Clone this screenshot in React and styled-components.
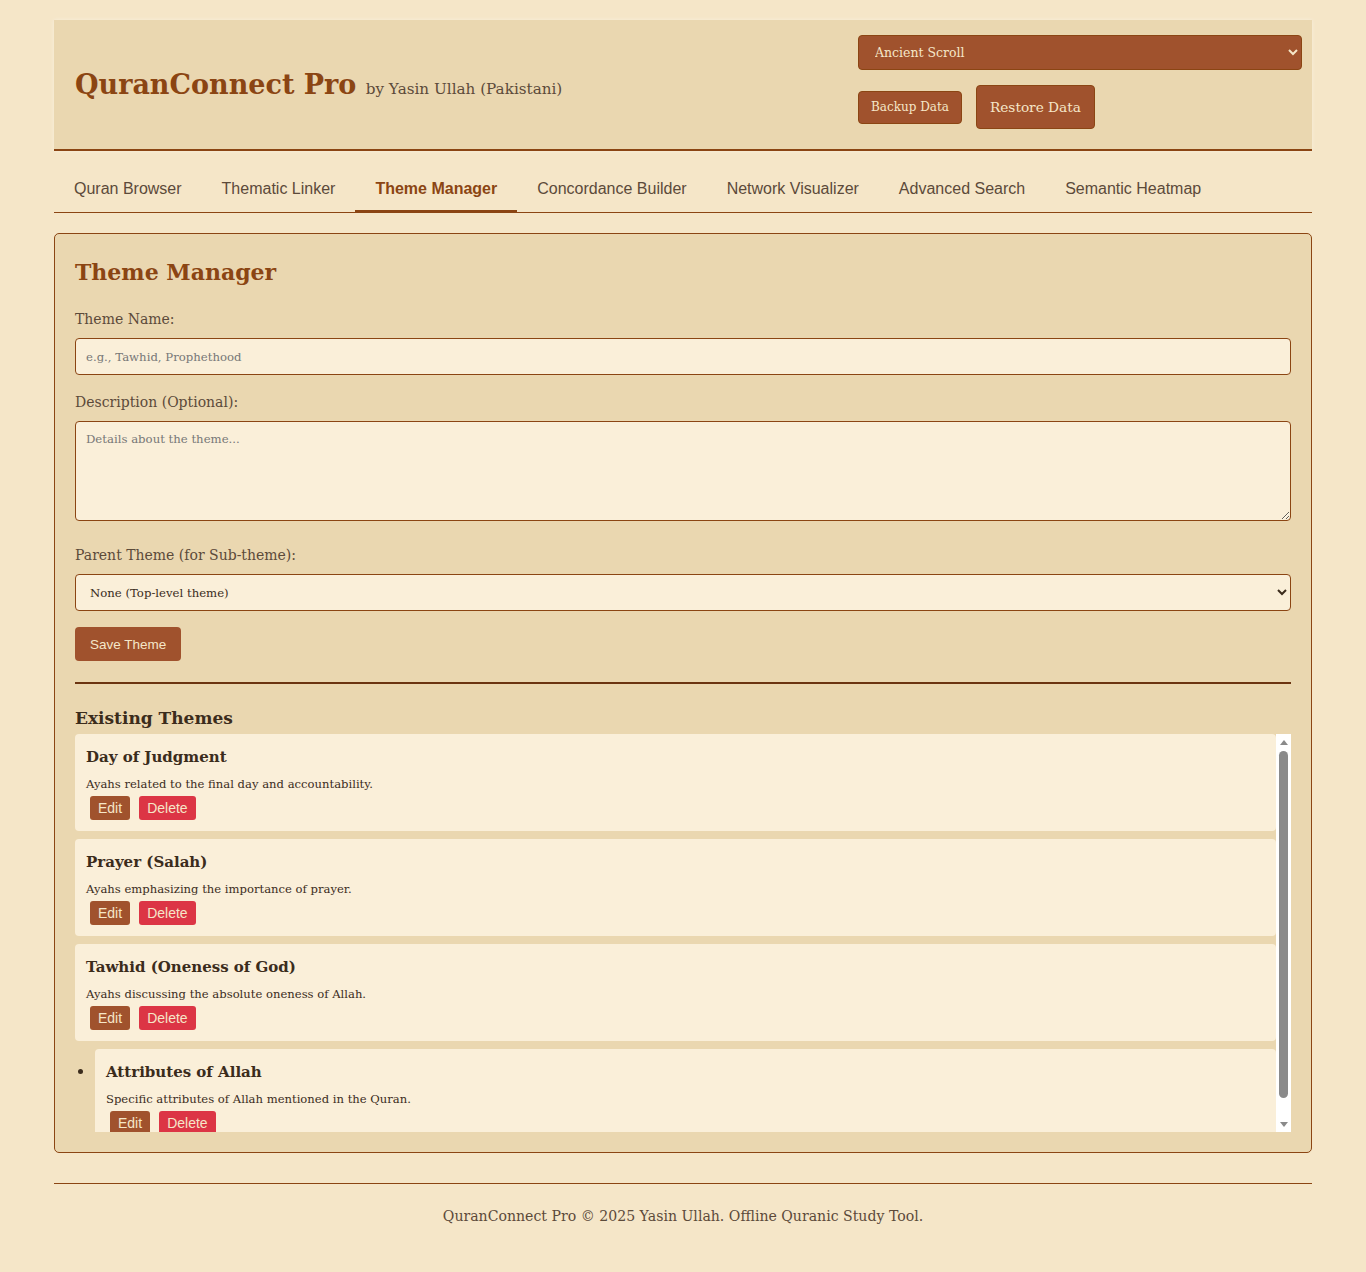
import React, { useState } from "react";
import styled, { createGlobalStyle } from "styled-components";

const colors = {
  page: "#f5e6c8",
  panel: "#ead7b0",
  cream: "#faefd9",
  brown: "#8b4513",
  sienna: "#a0522d",
  text: "#5c4a3a",
  dark: "#3b2c1c",
  light: "#f5e6c8",
  red: "#dc3545",
  scroll: "#8a8a8a",
};

const serif = `"DejaVu Serif", Georgia, serif`;
const sans = `"Liberation Sans", Arial, sans-serif`;

const GlobalStyle = createGlobalStyle`
  body {
    margin: 0;
    background: ${colors.page};
    font-family: ${serif};
    color: ${colors.text};
  }
`;

const tabs = [
  "Quran Browser",
  "Thematic Linker",
  "Theme Manager",
  "Concordance Builder",
  "Network Visualizer",
  "Advanced Search",
  "Semantic Heatmap",
];

const themes = [
  {
    title: "Day of Judgment",
    desc: "Ayahs related to the final day and accountability.",
  },
  {
    title: "Prayer (Salah)",
    desc: "Ayahs emphasizing the importance of prayer.",
  },
  {
    title: "Tawhid (Oneness of God)",
    desc: "Ayahs discussing the absolute oneness of Allah.",
    children: [
      {
        title: "Attributes of Allah",
        desc: "Specific attributes of Allah mentioned in the Quran.",
      },
    ],
  },
];

const ThemeItem = ({ theme }) => (
  <>
    <Item>
      <ItemTitle>{theme.title}</ItemTitle>
      <ItemDesc>{theme.desc}</ItemDesc>
      <Actions>
        <SmallButton>Edit</SmallButton>
        <SmallButton $danger>Delete</SmallButton>
      </Actions>
    </Item>
    {theme.children && (
      <SubList>
        {theme.children.map((child) => (
          <ThemeItem key={child.title} theme={child} />
        ))}
      </SubList>
    )}
  </>
);

const Scrollbar = () => (
  <Track>
    <Arrow width="8" height="5" viewBox="0 0 8 5">
      <path d="M4 0 L8 5 L0 5 Z" />
    </Arrow>
    <Thumb />
    <Arrow width="8" height="5" viewBox="0 0 8 5">
      <path d="M0 0 L8 0 L4 5 Z" />
    </Arrow>
  </Track>
);

const App = () => {
  const [active, setActive] = useState("Theme Manager");

  return (
    <Wrapper>
      <GlobalStyle />
      <Header>
        <Title>
          QuranConnect Pro <Byline>by Yasin Ullah (Pakistani)</Byline>
        </Title>
        <Controls>
          <SkinSelect defaultValue="scroll">
            <option value="scroll">Ancient Scroll</option>
            <option value="night">Night Reading</option>
          </SkinSelect>
          <ControlRow>
            <HeaderButton>Backup Data</HeaderButton>
            <HeaderButton $large>Restore Data</HeaderButton>
          </ControlRow>
        </Controls>
      </Header>

      <Nav>
        {tabs.map((tab) => (
          <Tab key={tab} $active={tab === active} onClick={() => setActive(tab)}>
            {tab}
          </Tab>
        ))}
      </Nav>

      <Panel>
        <PanelTitle>Theme Manager</PanelTitle>
        <Field $gap={18}>
          <Label>Theme Name:</Label>
          <Input type="text" placeholder="e.g., Tawhid, Prophethood" />
        </Field>
        <Field $gap={25}>
          <Label>Description (Optional):</Label>
          <TextArea placeholder="Details about the theme..." />
        </Field>
        <Field $gap={16}>
          <Label>Parent Theme (for Sub-theme):</Label>
          <ParentSelect defaultValue="">
            <option value="">None (Top-level theme)</option>
          </ParentSelect>
        </Field>
        <SaveButton>Save Theme</SaveButton>
        <Divider />
        <SectionTitle>Existing Themes</SectionTitle>
        <ListFrame>
          <ThemeList>
            {themes.map((theme) => (
              <ThemeItem key={theme.title} theme={theme} />
            ))}
          </ThemeList>
          <Scrollbar />
        </ListFrame>
      </Panel>

      <Footer>
        QuranConnect Pro © 2025 Yasin Ullah. Offline Quranic Study Tool.
      </Footer>
    </Wrapper>
  );
};

export default App;

const Wrapper = styled.div`
  max-width: 1258px;
  margin: 0 auto;
  padding-top: 20px;
`;

const Header = styled.header`
  display: flex;
  justify-content: space-between;
  align-items: center;
  background: ${colors.panel};
  padding: 15px 10px 20px 21px;
  border-bottom: 2px solid ${colors.brown};
  box-shadow: 0 0 4px rgba(255, 255, 255, 0.4);
`;

const Title = styled.h1`
  margin: 4px 0 0;
  font-size: 27px;
  font-weight: 700;
  color: ${colors.brown};
`;

const Byline = styled.span`
  font-size: 15.2px;
  font-weight: 400;
  color: ${colors.text};
`;

const Controls = styled.div`
  width: 444px;
  display: flex;
  flex-direction: column;
  gap: 15px;
`;

const SkinSelect = styled.select`
  height: 35px;
  padding: 0 12px;
  background: ${colors.sienna};
  color: ${colors.light};
  border: 1px solid ${colors.brown};
  border-radius: 4px;
  font-family: ${serif};
  font-size: 12.5px;
`;

const ControlRow = styled.div`
  display: flex;
  align-items: center;
  gap: 14px;
`;

const HeaderButton = styled.button`
  height: ${(p) => (p.$large ? "44px" : "33px")};
  padding: 0 ${(p) => (p.$large ? "13px" : "12px")};
  background: ${colors.sienna};
  color: ${colors.light};
  border: 1px solid ${colors.brown};
  border-radius: 4px;
  font-family: ${serif};
  font-size: ${(p) => (p.$large ? "13.7px" : "12px")};
  cursor: pointer;
`;

const Nav = styled.nav`
  display: flex;
  margin: 17px 0 20px;
  border-bottom: 1px solid ${colors.brown};
`;

const Tab = styled.button`
  padding: 12px 20px 12px;
  background: none;
  border: none;
  border-bottom: 3px solid ${(p) => (p.$active ? colors.brown : "transparent")};
  border-radius: 3px 3px 0 0;
  margin-bottom: -1px;
  font-family: ${sans};
  font-size: 16px;
  font-weight: ${(p) => (p.$active ? 700 : 400)};
  color: ${(p) => (p.$active ? colors.brown : colors.text)};
  cursor: pointer;
`;

const Panel = styled.main`
  background: ${colors.panel};
  border: 1px solid ${colors.brown};
  border-radius: 5px;
  padding: 20px;
`;

const PanelTitle = styled.h2`
  margin: 0 0 20px;
  line-height: 36px;
  font-size: 22px;
  font-weight: 700;
  color: ${colors.brown};
`;

const Field = styled.div`
  margin-bottom: ${(p) => p.$gap}px;
`;

const Label = styled.label`
  display: block;
  margin-bottom: 10px;
  font-size: 14px;
  line-height: 18px;
  color: ${colors.text};
`;

const fieldStyles = `
  display: block;
  width: 100%;
  box-sizing: border-box;
  background: ${colors.cream};
  border: 1px solid ${colors.brown};
  border-radius: 4px;
  font-family: ${serif};
  font-size: 11.7px;
  color: ${colors.dark};
  &::placeholder {
    color: #777;
  }
`;

const Input = styled.input`
  ${fieldStyles}
  height: 37px;
  padding: 0 10px;
`;

const TextArea = styled.textarea`
  ${fieldStyles}
  height: 100px;
  padding: 10px;
  resize: vertical;
`;

const ParentSelect = styled.select`
  ${fieldStyles}
  height: 37px;
  padding: 0 10px;
`;

const SaveButton = styled.button`
  display: block;
  height: 34px;
  padding: 0 15px;
  background: ${colors.sienna};
  color: ${colors.light};
  border: none;
  border-radius: 4px;
  font-family: ${sans};
  font-size: 13.5px;
  cursor: pointer;
`;

const Divider = styled.hr`
  margin: 21px 0 23px;
  border: none;
  border-top: 2px solid #6b3410;
`;

const SectionTitle = styled.h3`
  margin: 0 0 5px;
  font-size: 17px;
  line-height: 22px;
  color: ${colors.dark};
`;

const ListFrame = styled.div`
  display: flex;
  height: 398px;
`;

const ThemeList = styled.ul`
  flex: 1;
  list-style: none;
  margin: 0;
  padding: 0;
  overflow: hidden;
`;

const Track = styled.div`
  width: 15px;
  flex: none;
  display: flex;
  flex-direction: column;
  align-items: center;
  background: #fff;
`;

const Arrow = styled.svg`
  flex: none;
  margin: 6px 0 5px;
  fill: ${colors.scroll};
`;

const Thumb = styled.div`
  width: 9px;
  height: 347px;
  margin: 1px 0 auto;
  border-radius: 5px;
  background: ${colors.scroll};
`;

const SubList = styled.ul`
  list-style: disc;
  margin: 0;
  padding-left: 20px;
  color: ${colors.dark};
`;

const Item = styled.li`
  background: ${colors.cream};
  border-radius: 4px;
  padding: 12px 10px 11px 11px;
  margin-bottom: 8px;
`;

const ItemTitle = styled.h4`
  margin: 0 0 6px;
  font-size: 15px;
  line-height: 22px;
  color: ${colors.dark};
`;

const ItemDesc = styled.p`
  margin: 0 0 2px;
  font-size: 11.6px;
  line-height: 20px;
  color: ${colors.dark};
`;

const Actions = styled.div`
  display: flex;
  gap: 9px;
  margin-left: 4px;
`;

const SmallButton = styled.button`
  height: 24px;
  padding: 0 8px;
  background: ${(p) => (p.$danger ? colors.red : colors.sienna)};
  color: ${colors.light};
  border: none;
  border-radius: 3px;
  font-family: ${sans};
  font-size: 14px;
  cursor: pointer;
`;

const Footer = styled.footer`
  margin-top: 30px;
  padding: 20px 0;
  border-top: 1px solid ${colors.brown};
  text-align: center;
  font-size: 14.1px;
  line-height: 24px;
  color: ${colors.text};
`;
